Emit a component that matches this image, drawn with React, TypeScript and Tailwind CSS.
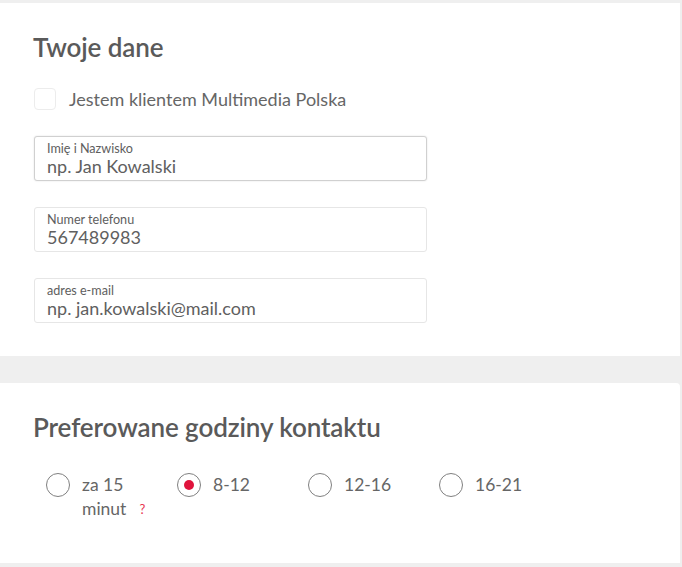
export default function App() {
  const font = { fontFamily: 'Lato, "Noto Sans", sans-serif' };
  return (
    <div className="w-[682px] h-[567px] bg-[#efefef] overflow-hidden pt-[3px]" style={font}>
      <div className="w-[680px] h-[353px] bg-white pl-[33px] pt-[29px]">
        <h2 className="text-[26px] leading-[30px] font-semibold text-[#5a5a5a] tracking-[-0.1px]">Twoje dane</h2>
        <div className="flex items-center mt-[26px] h-[22px]">
          <div className="w-[22px] h-[22px] ml-[1px] rounded-[4px] border border-[#ececec] bg-white" />
          <span className="ml-[13px] text-[18px] text-[#666]">Jestem klientem Multimedia Polska</span>
        </div>
        <div className="mt-[26px] flex flex-col gap-[26px] ml-[1px]">
          <Field label="Imię i Nazwisko" value="np. Jan Kowalski" strong />
          <Field label="Numer telefonu" value="567489983" />
          <Field label="adres e-mail" value="np. jan.kowalski@mail.com" />
        </div>
      </div>
      <div className="h-[27px]" />
      <div className="w-[680px] h-[180px] bg-white pl-[33px] pt-[29px] rounded-tr-[4px]">
        <h2 className="text-[26px] leading-[30px] font-semibold text-[#5a5a5a] tracking-[-0.1px]">Preferowane godziny kontaktu</h2>
        <div className="flex mt-[31px] ml-[13px]">
          <Radio label={<><span>za 15</span><br /><span>minut</span><span className="ml-[13px] text-[13px] text-[#e8354f] align-top">?</span></>} />
          <Radio label="8-12" checked />
          <Radio label="12-16" />
          <Radio label="16-21" />
        </div>
      </div>
    </div>
  );
}

function Field({ label, value, strong }: { label: string; value: string; strong?: boolean }) {
  return (
    <div
      className={
        "w-[393px] h-[45px] rounded-[3px] border bg-white pl-[12px] pt-[4px] " +
        (strong ? "border-[#d0d0d0] shadow-[0_0_2px_rgba(0,0,0,0.12)]" : "border-[#e6e6e6]")
      }
    >
      <div className="text-[12.6px] leading-[15px] text-[#5e5e5e]">{label}</div>
      <div className="text-[18px] leading-[21px] text-[#606060]">{value}</div>
    </div>
  );
}

function Radio({ label, checked }: { label: React.ReactNode; checked?: boolean }) {
  return (
    <div className="w-[131px] flex items-start">
      <div className="w-[24px] h-[24px] rounded-full border border-[#808080] bg-white flex items-center justify-center shrink-0">
        {checked && <div className="w-[10px] h-[10px] rounded-full bg-[#e0143c]" />}
      </div>
      <div className="ml-[12px] text-[17.5px] leading-[24px] text-[#666]">{label}</div>
    </div>
  );
}
